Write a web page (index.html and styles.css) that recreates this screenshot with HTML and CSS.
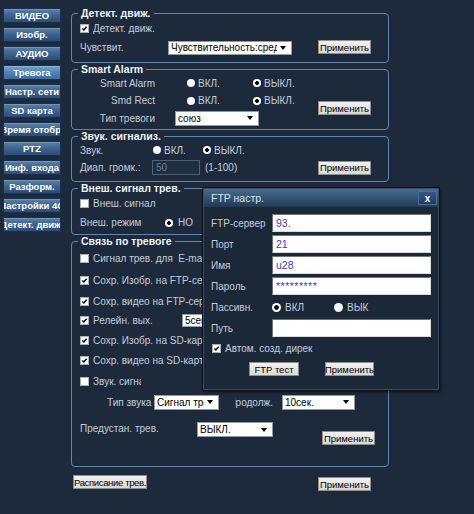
FILE: index.html
```html
<!DOCTYPE html>
<html lang="ru">
<head>
<meta charset="utf-8">
<title>Тревога</title>
<link rel="stylesheet" href="styles.css">
</head>
<body>
<div class="page">
  <nav class="nav">
    <div class="nav-btn"><span>ВИДЕО</span></div>
    <div class="nav-btn"><span>Изобр.</span></div>
    <div class="nav-btn"><span>АУДИО</span></div>
    <div class="nav-btn active"><span>Тревога</span></div>
    <div class="nav-btn"><span>Настр. сети</span></div>
    <div class="nav-btn"><span>SD карта</span></div>
    <div class="nav-btn"><span>Время отобр.</span></div>
    <div class="nav-btn"><span>PTZ</span></div>
    <div class="nav-btn"><span>Инф. входа</span></div>
    <div class="nav-btn"><span>Разформ.</span></div>
    <div class="nav-btn"><span>Настройки 4G</span></div>
    <div class="nav-btn"><span>Детект. движ.</span></div>
  </nav>

  <main class="main">
    <fieldset class="fs fs-motion">
      <legend>Детект. движ.</legend>
      <div class="fs-body pt1 pb4">
        <div class="row h16"><span class="cb on"><svg viewBox="0 0 9 9"><path d="M1.8 4.4 L3.7 6.4 L7.2 2.2"/></svg></span><span class="cb-text">Детект. движ.</span></div>
        <div class="row h22"><span class="lbl w88">Чувствит.</span><span class="sel w124"><span class="sel-val">Чувствительность:средн</span><span class="arrow"></span></span><span class="btn push">Применить</span></div>
      </div>
    </fieldset>

    <fieldset class="fs fs-smart">
      <legend>Smart Alarm</legend>
      <div class="fs-body split pb3">
        <div class="rows">
          <div class="row h16"><span class="lbl lbl-r w75">Smart Alarm</span><span class="opt opt-smart1"><span class="rd"></span>ВКЛ.</span><span class="opt"><span class="rd on"></span>ВЫКЛ.</span></div>
          <div class="row h19"><span class="lbl lbl-r w75">Smd Rect</span><span class="opt opt-smart1"><span class="rd"></span>ВКЛ.</span><span class="opt"><span class="rd on"></span>ВЫКЛ.</span></div>
          <div class="row h16"><span class="lbl lbl-r w75">Тип тревоги</span><span class="sel sel-type"><span class="sel-val">союз</span><span class="arrow"></span></span></div>
        </div>
        <span class="btn btn-smart">Применить</span>
      </div>
    </fieldset>

    <fieldset class="fs fs-sound">
      <legend>Звук. сигнализ.</legend>
      <div class="fs-body pb4">
        <div class="row h16"><span class="lbl w73">Звук.</span><span class="opt w50"><span class="rd"></span>ВКЛ.</span><span class="opt"><span class="rd on"></span>ВЫКЛ.</span></div>
        <div class="row h19"><span class="lbl w72">Диап. громк.:</span><span class="inp-dis">50</span><span class="range">(1-100)</span><span class="btn push">Применить</span></div>
      </div>
    </fieldset>

    <fieldset class="fs fs-ext">
      <legend>Внеш. сигнал трев.</legend>
      <div class="fs-body pb2">
        <div class="row h19"><span class="cb"></span><span class="cb-text">Внеш. сигнал</span></div>
        <div class="row h19"><span class="lbl w85">Внеш. режим</span><span class="opt opt-no"><span class="rd on"></span>НО</span></div>
      </div>
    </fieldset>

    <fieldset class="fs fs-link">
      <legend>Связь по тревоге</legend>
      <div class="fs-body pb21">
        <div class="row h23"><span class="cb"></span><span class="cb-text clip-r w110">Сигнал трев. для&nbsp; E-mail</span></div>
        <div class="row h21"><span class="cb on"><svg viewBox="0 0 9 9"><path d="M1.8 4.4 L3.7 6.4 L7.2 2.2"/></svg></span><span class="cb-text clip-r w110">Сохр. Изобр. на FTP-сервер</span></div>
        <div class="row h20"><span class="cb on"><svg viewBox="0 0 9 9"><path d="M1.8 4.4 L3.7 6.4 L7.2 2.2"/></svg></span><span class="cb-text clip-r w110">Сохр. видео на FTP-сервер</span></div>
        <div class="row h19"><span class="cb on"><svg viewBox="0 0 9 9"><path d="M1.8 4.4 L3.7 6.4 L7.2 2.2"/></svg></span><span class="cb-text w89">Релейн. вых.</span><span class="sel sel-relay"><span class="sel-val">5сек.</span><span class="arrow"></span></span></div>
        <div class="row h21"><span class="cb on"><svg viewBox="0 0 9 9"><path d="M1.8 4.4 L3.7 6.4 L7.2 2.2"/></svg></span><span class="cb-text clip-r w110">Сохр. Изобр. на SD-карту</span></div>
        <div class="row h19"><span class="cb on"><svg viewBox="0 0 9 9"><path d="M1.8 4.4 L3.7 6.4 L7.2 2.2"/></svg></span><span class="cb-text clip-r w110">Сохр. видео на SD-карту</span></div>
        <div class="row h23"><span class="cb"></span><span class="cb-text clip-r w48">Звук. сигнал</span></div>
        <div class="row h18"><span class="lbl lbl-sound">Тип звука</span><span class="sel sel-sound"><span class="sel-val">Сигнал трев.</span><span class="arrow"></span></span><span class="clip-l">Продолж.</span><span class="sel sel-dur"><span class="sel-val">10сек.</span><span class="arrow"></span></span></div>
        <div class="row row-preset"><span class="lbl lbl-preset">Предустан. трев.</span><span class="sel sel-preset"><span class="sel-val">ВЫКЛ.</span><span class="arrow"></span></span><span class="btn btn-link">Применить</span></div>
      </div>
    </fieldset>

    <div class="bottom-bar">
      <span class="btn btn-sched">Расписание трев.</span>
      <span class="btn btn-bottom">Применить</span>
    </div>
  </main>
</div>

<div class="dialog">
  <div class="dlg-title"><span>FTP настр.</span><span class="dlg-close">x</span></div>
  <div class="dlg-body">
    <div class="drow"><span class="dlbl">FTP-сервер</span><span class="inp">93.</span></div>
    <div class="drow"><span class="dlbl">Порт</span><span class="inp">21</span></div>
    <div class="drow"><span class="dlbl">Имя</span><span class="inp">u28</span></div>
    <div class="drow"><span class="dlbl">Пароль</span><span class="inp pwd">*********</span></div>
    <div class="drow"><span class="dlbl">Пассивн.</span><span class="opt dopt"><span class="rd rd-lg on"></span>ВКЛ</span><span class="opt"><span class="rd rd-lg"></span>ВЫК</span></div>
    <div class="drow"><span class="dlbl">Путь</span><span class="inp"></span></div>
    <div class="drow dcheck"><span class="cb on"><svg viewBox="0 0 9 9"><path d="M1.8 4.4 L3.7 6.4 L7.2 2.2"/></svg></span><span class="cb-text">Автом. созд. дирек</span></div>
    <div class="dbtns"><span class="btn btn-ftp">FTP тест</span><span class="btn btn-dapply">Применить</span></div>
  </div>
</div>
</body>
</html>
```

FILE: styles.css
```css
* { box-sizing: border-box; }

body {
  margin: 0;
  width: 474px;
  height: 514px;
  overflow: hidden;
  position: relative;
  background: #1c2a3b;
  font-family: "Liberation Sans", Arial, sans-serif;
  font-size: 10px;
  color: #c4ced9;
}

.page { display: flex; }

/* ---------- left navigation ---------- */
.nav {
  width: 58px;
  margin-left: 3px;
  padding-top: 8px;
  display: flex;
  flex-direction: column;
  gap: 4px;
}
.nav-btn {
  height: 15px;
  display: flex;
  justify-content: center;
  align-items: center;
  overflow: hidden;
  white-space: nowrap;
  color: #fff;
  font-weight: bold;
  font-size: 9.5px;
  background: linear-gradient(#5b81aa 0%, #40658f 45%, #2b4c75 100%);
  border: 1px solid #17304d;
  box-shadow: inset 0 1px 0 rgba(255,255,255,0.18);
}
.nav-btn span { flex: none; }
.nav-btn.active { background: linear-gradient(#74a4d3 0%, #5584b6 45%, #3d6b9c 100%); }

/* ---------- main column ---------- */
.main {
  width: 318px;
  margin-left: 10px;
  padding-top: 7px;
  display: flex;
  flex-direction: column;
}

fieldset.fs {
  margin: 0;
  padding: 0 17px 0 8px;
  border: 1px solid #6386ac;
  border-radius: 4px;
  min-width: 0;
}
.fs legend {
  padding: 0 3px;
  margin-left: -2px;
  font-weight: bold;
  font-size: 10.5px;
  line-height: 12px;
  color: #f0f4f8;
}
.fs-smart { margin-top: 3px; }
.fs-sound { margin-top: 4px; }
.fs-ext { margin-top: 2px; }
.fs-link { margin-top: 5px; }

.pt1 { padding-top: 1px; }
.pb2 { padding-bottom: 2px; }
.pb3 { padding-bottom: 3px; }
.pb4 { padding-bottom: 4px; }
.pb21 { padding-bottom: 21px; }

.split { display: flex; align-items: flex-start; }
.rows { flex: 1; display: flex; flex-direction: column; }

.row { display: flex; align-items: center; white-space: nowrap; }
.h16 { height: 16px; }
.h18 { height: 18px; }
.h19 { height: 19px; }
.h20 { height: 20px; }
.h21 { height: 21px; }
.h22 { height: 22px; }
.h23 { height: 23px; }

.lbl { flex: none; }
.lbl-r { text-align: right; }
.w48 { width: 48px; }
.w50 { width: 50px; }
.w72 { width: 72px; }
.w73 { width: 73px; }
.w75 { width: 75px; }
.w85 { width: 85px; }
.w88 { width: 88px; }
.w89 { width: 89px; }
.w110 { width: 110px; }
.w124 { width: 124px; }

/* checkbox */
.cb {
  flex: none;
  width: 9px;
  height: 9px;
  background: #fff;
  border: 1px solid #a8b0b8;
  display: flex;
}
.cb svg { width: 100%; height: 100%; }
.cb path { fill: none; stroke: #000; stroke-width: 1.7; }
.cb-text { margin-left: 4px; flex: none; }
.clip-r { overflow: hidden; }

/* radio */
.opt { display: flex; align-items: center; flex: none; }
.rd {
  flex: none;
  width: 8px;
  height: 8px;
  border-radius: 50%;
  margin-right: 3px;
  background: radial-gradient(circle at 40% 35%, #ffffff 0 45%, #d4d8dc 100%);
}
.rd.on { background: radial-gradient(circle, #000 0 1.6px, #fff 2.2px); }
.rd-lg { width: 9px; height: 9px; margin-right: 4px; }
.rd-lg.on { background: radial-gradient(circle, #000 0 2px, #fff 2.6px); }
.opt-smart1 { margin-left: 32px; width: 66px; }
.opt-no .rd { margin-right: 5px; }

/* select */
.sel {
  flex: none;
  display: flex;
  align-items: center;
  background: #fff;
  border: 1px solid #8d9aa8;
  color: #000;
  padding-left: 2px;
  overflow: hidden;
}
.sel-val { flex: 1; min-width: 0; overflow: hidden; white-space: nowrap; }
.arrow {
  flex: none;
  width: 0;
  height: 0;
  margin: 0 5px 0 3px;
  border-left: 3px solid transparent;
  border-right: 3px solid transparent;
  border-top: 4px solid #000;
}
.w124.sel { height: 14px; margin-top: 1px; }
.sel-type { width: 84px; height: 15px; margin-left: 20px; }
.sel-relay { width: 70px; height: 13px; }
.sel-sound { width: 65px; height: 15px; }
.sel-dur { width: 73px; height: 15px; margin-left: 9px; }
.sel-preset { width: 76px; height: 15px; margin-top: 2px; }

/* buttons */
.btn {
  flex: none;
  height: 14px;
  display: inline-flex;
  align-items: center;
  justify-content: center;
  padding: 0 1px;
  background: linear-gradient(#f2f2f2, #d8d8d8);
  border: 1px solid #8e8e8e;
  color: #000;
  font-size: 9.5px;
  white-space: nowrap;
}
.push { margin-left: auto; }
.btn-smart { margin-top: 26px; }
.btn-link { margin-left: auto; margin-right: -4px; margin-top: 11px; }

/* disabled input */
.inp-dis {
  flex: none;
  width: 48px;
  height: 15px;
  border: 1px solid #4e5f72;
  background: #1f2e40;
  color: #6e8093;
  padding-left: 3px;
  display: flex;
  align-items: center;
}
.range { margin-left: 5px; }

.lbl-sound { margin-left: 27px; width: 47px; }
.clip-l {
  flex: none;
  width: 38px;
  margin-left: 16px;
  display: flex;
  justify-content: flex-end;
  overflow: hidden;
}
.row-preset { align-items: flex-start; margin-top: 9px; }
.lbl-preset { width: 117px; line-height: 18px; }

.bottom-bar { display: flex; align-items: flex-start; margin-top: 8px; }
.btn-sched { margin-left: 2px; letter-spacing: -0.35px; padding: 0; }
.btn-bottom { margin-left: auto; margin-right: 18px; margin-top: 2px; }

/* ---------- dialog ---------- */
.dialog {
  position: absolute;
  left: 203px;
  top: 188px;
  width: 236px;
  height: 202px;
  background: #1b2838;
  border: 1px solid #3a4d63;
  box-shadow: 0 0 0 1px #0a111a, 2px 2px 3px rgba(0,0,0,0.5);
}
.dlg-title {
  height: 18px;
  display: flex;
  align-items: center;
  padding-left: 7px;
  padding-right: 1px;
  background: linear-gradient(#4a6b90 0%, #33536f 50%, #223a56 100%);
  color: #d9e2ec;
  font-size: 10.5px;
}
.dlg-close {
  margin-left: auto;
  width: 19px;
  height: 14px;
  display: flex;
  align-items: center;
  justify-content: center;
  background: linear-gradient(#35577f, #1f3c62);
  border: 1px solid #4c6d94;
  color: #fff;
  font-weight: bold;
  font-size: 10px;
}
.dlg-body {
  padding: 7px 7px 0 7px;
  display: flex;
  flex-direction: column;
  gap: 3px;
}
.drow { height: 18px; display: flex; align-items: center; white-space: nowrap; }
.dlbl { width: 61px; flex: none; }
.inp {
  flex: 1;
  height: 18px;
  background: #fff;
  border: 1px solid;
  border-color: #6f747a #d8dadc #d8dadc #6f747a;
  color: #3a3ad0;
  padding-left: 3px;
  display: flex;
  align-items: center;
  font-size: 10.5px;
}
.pwd { letter-spacing: 0.5px; }
.dopt { width: 62px; }
.dcheck { height: 16px; }
.dcheck .cb { margin-left: 1px; }
.dbtns { display: flex; margin-top: 3px; }
.btn-ftp { width: 50px; margin-left: 38px; }
.btn-dapply { width: 49px; margin-left: 26px; }
```
